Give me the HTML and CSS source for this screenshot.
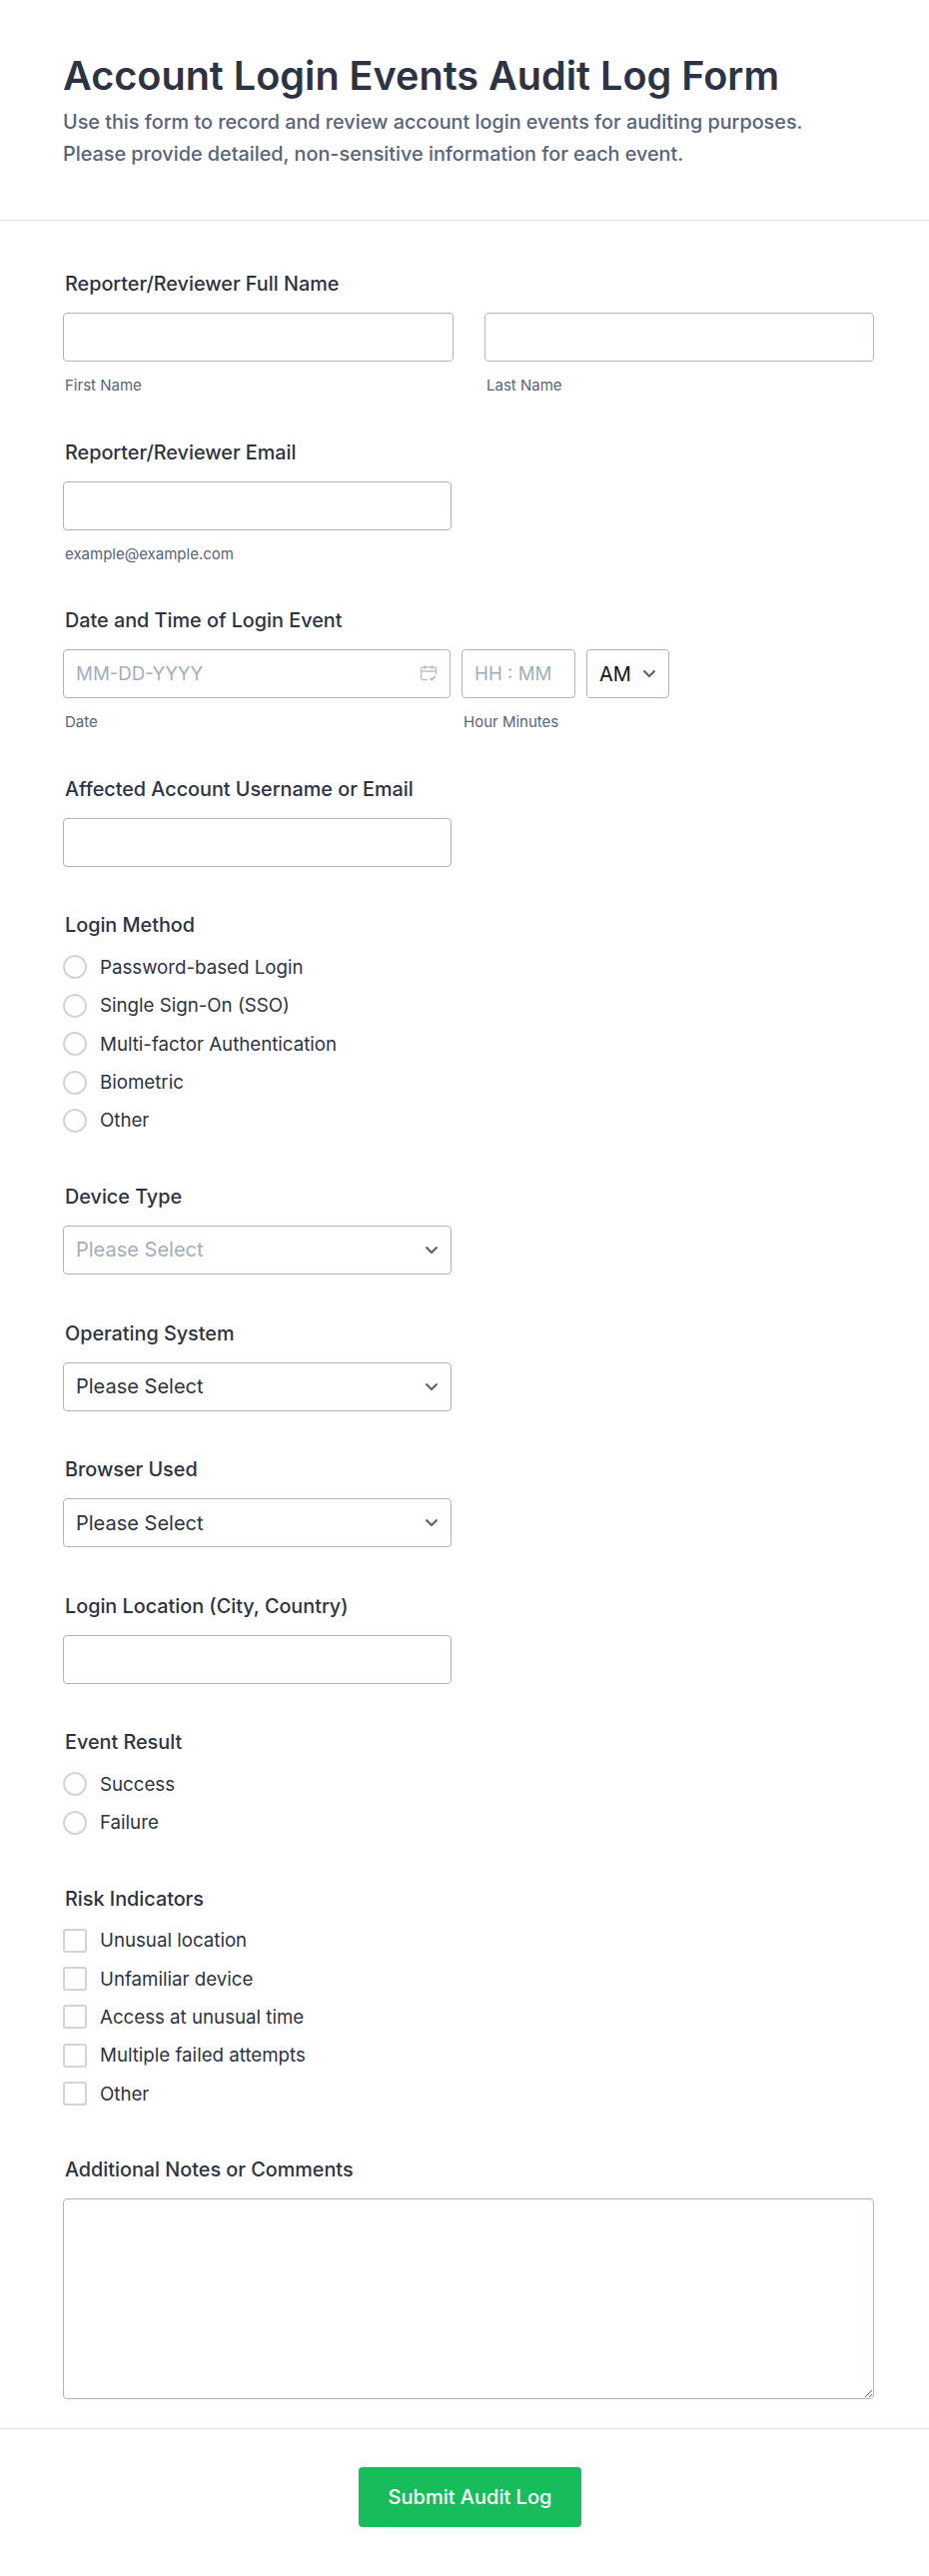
FILE: index.html
```html
<!DOCTYPE html>
<html lang="en">
<head>
    <meta charset="UTF-8">
    <meta name="viewport" content="width=device-width, initial-scale=1.0">
    <title>Account Login Events Audit Log Form</title>
    <link rel="stylesheet" href="styles.css">
</head>
<body>
    <header class="form-header">
        <h1>Account Login Events Audit Log Form</h1>
        <p>Use this form to record and review account login events for auditing purposes.<br>Please provide detailed, non-sensitive information for each event.</p>
    </header>

    <form class="form-body">
        <div class="field">
            <div class="field-label">Reporter/Reviewer Full Name</div>
            <div class="name-row">
                <div>
                    <input class="text-input" type="text">
                    <div class="sublabel">First Name</div>
                </div>
                <div>
                    <input class="text-input" type="text">
                    <div class="sublabel">Last Name</div>
                </div>
            </div>
        </div>

        <div class="field">
            <div class="field-label">Reporter/Reviewer Email</div>
            <input class="text-input narrow" type="text">
            <div class="sublabel">example@example.com</div>
        </div>

        <div class="field">
            <div class="field-label">Date and Time of Login Event</div>
            <div class="date-row">
                <div class="date-col">
                    <div class="control-wrap">
                        <input class="text-input" type="text" placeholder="MM-DD-YYYY">
                        <svg class="calendar-icon" width="18" height="18" viewBox="0 0 18 18" fill="none" stroke="#bcc1ce" stroke-width="1.4">
                            <path d="M8 15.5H3.5a2 2 0 0 1-2-2V5a2 2 0 0 1 2-2h11a2 2 0 0 1 2 2v5.5"/>
                            <path d="M1.5 7h15M5.5 1v4M12.5 1v4"/>
                            <path d="M10.5 14l1.8 1.6 3.4-3.4" stroke="#a3a9b8"/>
                        </svg>
                    </div>
                    <div class="sublabel">Date</div>
                </div>
                <div class="time-col">
                    <input class="text-input" type="text" placeholder="HH : MM">
                    <div class="sublabel">Hour Minutes</div>
                </div>
                <div class="ampm-col">
                    <div class="control-wrap">
                        <select class="select-input ampm">
                            <option>AM</option>
                            <option>PM</option>
                        </select>
                        <svg class="chevron" width="14" height="9" viewBox="0 0 14 9" fill="none" stroke="#57647e" stroke-width="2.2"><path d="M1.5 1.5 7 7l5.5-5.5"/></svg>
                    </div>
                </div>
            </div>
        </div>

        <div class="field">
            <div class="field-label">Affected Account Username or Email</div>
            <input class="text-input narrow" type="text">
        </div>

        <div class="field options-field">
            <div class="field-label">Login Method</div>
            <div class="options">
                <label class="option"><span class="radio"></span>Password-based Login</label>
                <label class="option"><span class="radio"></span>Single Sign-On (SSO)</label>
                <label class="option"><span class="radio"></span>Multi-factor Authentication</label>
                <label class="option"><span class="radio"></span>Biometric</label>
                <label class="option"><span class="radio"></span>Other</label>
            </div>
        </div>

        <div class="field">
            <div class="field-label">Device Type</div>
            <div class="control-wrap narrow">
                <select class="select-input placeholder"><option>Please Select</option></select>
                <svg class="chevron" width="14" height="9" viewBox="0 0 14 9" fill="none" stroke="#57647e" stroke-width="2.2"><path d="M1.5 1.5 7 7l5.5-5.5"/></svg>
            </div>
        </div>

        <div class="field">
            <div class="field-label">Operating System</div>
            <div class="control-wrap narrow">
                <select class="select-input"><option>Please Select</option></select>
                <svg class="chevron" width="14" height="9" viewBox="0 0 14 9" fill="none" stroke="#57647e" stroke-width="2.2"><path d="M1.5 1.5 7 7l5.5-5.5"/></svg>
            </div>
        </div>

        <div class="field">
            <div class="field-label">Browser Used</div>
            <div class="control-wrap narrow">
                <select class="select-input"><option>Please Select</option></select>
                <svg class="chevron" width="14" height="9" viewBox="0 0 14 9" fill="none" stroke="#57647e" stroke-width="2.2"><path d="M1.5 1.5 7 7l5.5-5.5"/></svg>
            </div>
        </div>

        <div class="field">
            <div class="field-label">Login Location (City, Country)</div>
            <input class="text-input narrow" type="text">
        </div>

        <div class="field options-field">
            <div class="field-label">Event Result</div>
            <div class="options">
                <label class="option"><span class="radio"></span>Success</label>
                <label class="option"><span class="radio"></span>Failure</label>
            </div>
        </div>

        <div class="field options-field">
            <div class="field-label">Risk Indicators</div>
            <div class="options">
                <label class="option"><span class="checkbox"></span>Unusual location</label>
                <label class="option"><span class="checkbox"></span>Unfamiliar device</label>
                <label class="option"><span class="checkbox"></span>Access at unusual time</label>
                <label class="option"><span class="checkbox"></span>Multiple failed attempts</label>
                <label class="option"><span class="checkbox"></span>Other</label>
            </div>
        </div>

        <div class="field">
            <div class="field-label">Additional Notes or Comments</div>
            <textarea class="notes"></textarea>
        </div>
    </form>

    <footer class="form-footer">
        <button class="submit" type="button">Submit Audit Log</button>
    </footer>
</body>
</html>
```

FILE: styles.css
```css
* {
    margin: 0;
    padding: 0;
    box-sizing: border-box;
}

body {
    font-family: 'Inter', 'Liberation Sans', sans-serif;
    background: #fff;
    color: #2c3345;
    height: 2579px;
    overflow: hidden;
}

.form-header {
    height: 221px;
    padding: 52px 63px 0;
    border-bottom: 1px solid #dfe1e9;
}

.form-header h1 {
    font-size: 39.6px;
    font-weight: 600;
    line-height: 48px;
    color: #2c3345;
}

.form-header p {
    margin-top: 6px;
    font-size: 19.8px;
    font-weight: 500;
    line-height: 32px;
    color: #57647e;
}

.form-body {
    padding: 51px 55px 0 63px;
    height: 2211px;
    border-bottom: 1px solid #dfe1e9;
}

.field {
    margin-bottom: 46.6px;
}

.options-field {
    margin-bottom: 52px;
}

.field-label {
    padding-left: 2px;
    margin-bottom: 17px;
    font-size: 19.8px;
    font-weight: 500;
    line-height: 24px;
    color: #2c3345;
}

.sublabel {
    padding-left: 2px;
    margin-top: 16px;
    font-size: 15px;
    line-height: 16px;
    color: #57647e;
}

.text-input,
.select-input {
    display: block;
    width: 100%;
    height: 49px;
    border: 1px solid #aeb3c2;
    border-radius: 4px;
    background: #fff;
    padding: 0 12px;
    font-family: inherit;
    font-size: 18.7px;
    color: #2c3345;
    appearance: none;
    outline: none;
}

.select-input {
    font-size: 20px;
}

.text-input::placeholder {
    color: #a0aec0;
    opacity: 1;
}

.narrow {
    width: 389px;
}

.name-row {
    display: grid;
    grid-template-columns: 391px 390px;
    gap: 31px;
}

.date-row {
    display: flex;
    gap: 11px;
}

.date-col {
    width: 388px;
}

.time-col {
    width: 114px;
}

.ampm-col {
    width: 83px;
}

.control-wrap {
    position: relative;
}

.calendar-icon {
    position: absolute;
    right: 13px;
    top: 15px;
}

.chevron {
    position: absolute;
    right: 13px;
    top: 20px;
}

.select-input.placeholder {
    color: #a0aec0;
}

.select-input.ampm {
    color: #0f1117;
}

.options {
    display: flex;
    flex-direction: column;
    gap: 14.4px;
    padding-top: 1px;
}

.option {
    display: flex;
    align-items: center;
    gap: 13px;
    height: 24px;
    font-size: 18.7px;
    color: #2c3345;
}

.radio,
.checkbox {
    flex: none;
    width: 24px;
    height: 24px;
    border: 2px solid #d0d4df;
    background: #fff;
}

.radio {
    border-radius: 50%;
}

.checkbox {
    border-radius: 3px;
}

.notes {
    display: block;
    width: 100%;
    height: 201px;
    border: 1px solid #aeb3c2;
    border-radius: 4px;
    outline: none;
    resize: vertical;
}

.form-footer {
    display: flex;
    justify-content: center;
    padding-top: 38px;
    padding-left: 11px;
}

.submit {
    width: 223px;
    height: 60px;
    border: none;
    border-radius: 4px;
    background: #18bd5b;
    color: #fff;
    font-family: inherit;
    font-size: 20px;
    font-weight: 500;
    cursor: pointer;
}
```
